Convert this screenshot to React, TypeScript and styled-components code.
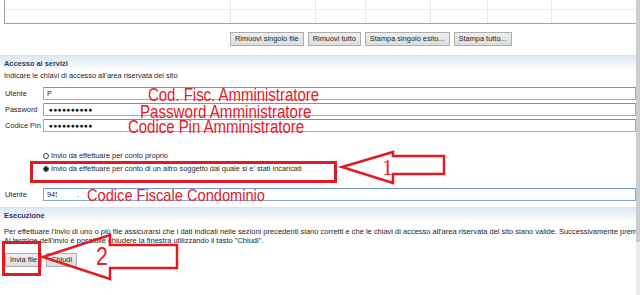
import React from 'react'
import styled, { createGlobalStyle } from 'styled-components'

const GlobalStyle = createGlobalStyle`
  *, *::before, *::after { box-sizing: border-box; }
  html, body { margin: 0; padding: 0; background: #fff; }
  body { font-family: "Liberation Sans", Arial, sans-serif; }
`

const Window = styled.div`
  position: relative;
  width: 640px;
  height: 295px;
  overflow: hidden;
  display: flex;
  background: #fff;
  color: #1e1e1e;
  font-size: 7.4px;
`

const Content = styled.div`
  flex: 1;
  min-width: 0;
  display: flex;
  flex-direction: column;
`

const ScrollBar = styled.div`
  width: 4px;
  display: flex;
  flex-direction: column;
  background: #ebebeb;
`

const Thumb = styled.div`
  height: 242px;
  background: #cdcdcd;
`

const FileTable = styled.div`
  margin-left: 4px;
  height: 24px;
  display: grid;
  grid-template-rows: 10px 13px;
  border-left: 1px solid #a3a3a3;
  border-bottom: 1px solid #a3a3a3;
`

const TableRow = styled.div<{ $last?: boolean }>`
  display: grid;
  grid-template-columns: 226px 85px 50px 65px 57px 64px 1fr;
  border-bottom: ${({ $last }) => ($last ? 'none' : '1px solid #eeeeee')};
`

const Cell = styled.div<{ $last?: boolean }>`
  border-right: ${({ $last }) => ($last ? 'none' : '1px solid #e8e8e8')};
`

const ActionBar = styled.div<{ $indent: number; $top: number }>`
  display: flex;
  gap: 4px;
  padding-left: ${({ $indent }) => $indent}px;
  margin-top: ${({ $top }) => $top}px;
`

const Button = styled.button`
  height: 14px;
  padding: 0 4px;
  margin: 0;
  font-family: inherit;
  font-size: 7.4px;
  line-height: 12px;
  color: #1e1e1e;
  background: linear-gradient(#eeeeee, #dddddd);
  border: 1px solid #adadad;
  border-radius: 0;
  white-space: nowrap;
`

const SectionBand = styled.div<{ $top: number }>`
  height: 15px;
  margin-top: ${({ $top }) => $top}px;
  padding-left: 4px;
  display: flex;
  align-items: center;
  border-top: 1px solid #d7e2ef;
  background: linear-gradient(#dfe8f3, #f3f6fa 70%, #ffffff);
  color: #1d3d6e;
  font-weight: bold;
`

const Hint = styled.div<{ $top: number }>`
  margin-top: ${({ $top }) => $top}px;
  padding-left: 4px;
  line-height: 10px;
  white-space: nowrap;
`

const FieldList = styled.div<{ $top: number }>`
  margin-top: ${({ $top }) => $top}px;
  display: flex;
  flex-direction: column;
  gap: 3px;
`

const FieldRow = styled.div`
  display: grid;
  grid-template-columns: 38px 1fr;
  align-items: center;
  padding-left: 5px;
  height: 13px;
`

const FieldLabel = styled.span`
  white-space: nowrap;
`

const Input = styled.div<{ $focused?: boolean }>`
  height: 13px;
  display: flex;
  align-items: center;
  padding-left: 3px;
  border: 1px solid ${({ $focused }) => ($focused ? '#80a9d6' : '#ababab')};
  border-top-color: ${({ $focused }) => ($focused ? '#6f9bcc' : '#8f8f8f')};
  background: #fff;
  white-space: nowrap;
  overflow: hidden;
`

const Dots = styled.span`
  font-size: 6.6px;
  letter-spacing: 0.4px;
  padding-left: 2px;
  color: #111;
`

const ClippedValue = styled.span`
  display: inline-block;
  width: 10px;
  overflow: hidden;
`

const Period = styled.span`
  margin-left: 20px;
`

const RadioGroup = styled.div<{ $top: number }>`
  margin-top: ${({ $top }) => $top}px;
  padding-left: 43px;
  display: flex;
  flex-direction: column;
`

const RadioRow = styled.label`
  height: 13px;
  display: flex;
  align-items: center;
  gap: 2px;
  white-space: nowrap;
`

const RadioDot = styled.span<{ $checked?: boolean }>`
  width: 6px;
  height: 6px;
  border-radius: 50%;
  border: 1px solid #3c3c3c;
  background: ${({ $checked }) =>
    $checked ? 'radial-gradient(circle, #1e1e1e 0 1.6px, #fff 1.8px)' : '#fff'};
`

const Paragraph = styled.div<{ $top: number }>`
  margin-top: ${({ $top }) => $top}px;
  padding-left: 4px;
  font-size: 7.5px;
  line-height: 8.5px;
  white-space: nowrap;
  overflow: hidden;
`

/* annotation layer drawn over the screenshot */

const Overlay = styled.svg`
  position: absolute;
  inset: 0;
  pointer-events: none;
`

const Note = styled.span<{ $x: number; $y: number; $size: number; $scale: number }>`
  position: absolute;
  left: ${({ $x }) => $x}px;
  top: ${({ $y }) => $y}px;
  font-family: "Liberation Sans", Arial, sans-serif;
  font-size: ${({ $size }) => $size}px;
  line-height: ${({ $size }) => $size}px;
  color: #e3202a;
  white-space: nowrap;
  transform: scaleX(${({ $scale }) => $scale});
  transform-origin: left top;
`

const Digit = styled(Note)<{ $serif?: boolean }>`
  font-family: ${({ $serif }) =>
    $serif ? '"Liberation Serif", "Times New Roman", serif' : '"Liberation Sans", Arial, sans-serif'};
`

const RED = '#e11b24'

const columns = [0, 1, 2, 3, 4, 5, 6]

const notes = [
  { text: 'Cod. Fisc. Amministratore', x: 148, y: 86, size: 18, scale: 0.83 },
  { text: 'Password Amministratore', x: 140, y: 103, size: 18, scale: 0.84 },
  { text: 'Codice Pin Amministratore', x: 128, y: 118, size: 18, scale: 0.83 },
  { text: 'Codice Fiscale Condominio', x: 87, y: 187, size: 17, scale: 0.86 },
]

const arrow = (tipX: number, tipY: number, baseX: number, headTop: number, headBottom: number, shaftTop: number, shaftBottom: number, endX: number) =>
  `${tipX},${tipY} ${baseX},${headTop} ${baseX},${shaftTop} ${endX},${shaftTop} ${endX},${shaftBottom} ${baseX},${shaftBottom} ${baseX},${headBottom}`

export default function App() {
  return (
    <>
      <GlobalStyle />
      <Window>
        <Content>
          <FileTable>
            {[false, true].map(last => (
              <TableRow key={String(last)} $last={last}>
                {columns.map(c => (
                  <Cell key={c} $last={c === columns.length - 1} />
                ))}
              </TableRow>
            ))}
          </FileTable>

          <ActionBar $indent={230} $top={8}>
            <Button>Rimuovi singolo file</Button>
            <Button>Rimuovi tutto</Button>
            <Button>Stampa singolo esito...</Button>
            <Button>Stampa tutto...</Button>
          </ActionBar>

          <SectionBand $top={9}>Accesso ai servizi</SectionBand>
          <Hint $top={1}>Indicare le chiavi di accesso all'area riservata del sito</Hint>

          <FieldList $top={6}>
            <FieldRow>
              <FieldLabel>Utente</FieldLabel>
              <Input>P</Input>
            </FieldRow>
            <FieldRow>
              <FieldLabel>Password</FieldLabel>
              <Input><Dots>●●●●●●●●●●</Dots></Input>
            </FieldRow>
            <FieldRow>
              <FieldLabel>Codice Pin</FieldLabel>
              <Input><Dots>●●●●●●●●●●</Dots></Input>
            </FieldRow>
          </FieldList>

          <RadioGroup $top={17}>
            <RadioRow>
              <RadioDot />
              Invio da effettuare per conto proprio
            </RadioRow>
            <RadioRow>
              <RadioDot $checked />
              Invio da effettuare per conto di un altro soggetto dal quale si e' stati incaricati
            </RadioRow>
          </RadioGroup>

          <FieldList $top={13}>
            <FieldRow>
              <FieldLabel>Utente</FieldLabel>
              <Input $focused>
                <ClippedValue>945</ClippedValue>
                <Period>.</Period>
              </Input>
            </FieldRow>
          </FieldList>

          <SectionBand $top={6}>Esecuzione</SectionBand>
          <Paragraph $top={6}>
            Per effettuare l'invio di uno o più file assicurarsi che i dati indicati nelle sezioni precedenti siano corretti e che le chiavi di accesso all'area riservata del sito siano valide. Successivamente premere il tasto "Invia file".
            <br />
            Al termine dell'invio è possibile chiudere la finestra utilizzando il tasto "Chiudi".
          </Paragraph>

          <ActionBar $indent={5} $top={8}>
            <Button>Invia file</Button>
            <Button>Chiudi</Button>
          </ActionBar>
        </Content>
        <ScrollBar>
          <Thumb />
        </ScrollBar>

        <Overlay width={640} height={295} viewBox="0 0 640 295">
          <rect x={31.5} y={162.5} width={304} height={19} fill="none" stroke={RED} strokeWidth={3} />
          <polygon
            points={arrow(342, 167, 393, 152, 183, 156, 174, 444)}
            fill="none"
            stroke={RED}
            strokeWidth={2.5}
          />
          <rect x={3.5} y={242.5} width={36} height={32} fill="none" stroke={RED} strokeWidth={3} />
          <polygon
            points={arrow(43, 257, 110, 235, 279, 245, 268, 177)}
            fill="none"
            stroke={RED}
            strokeWidth={2.5}
          />
        </Overlay>

        {notes.map(n => (
          <Note key={n.text} $x={n.x} $y={n.y} $size={n.size} $scale={n.scale}>
            {n.text}
          </Note>
        ))}
        <Digit $serif $x={382} $y={155} $size={24} $scale={0.9}>1</Digit>
        <Digit $x={96} $y={244} $size={25} $scale={0.85}>2</Digit>
      </Window>
    </>
  )
}
